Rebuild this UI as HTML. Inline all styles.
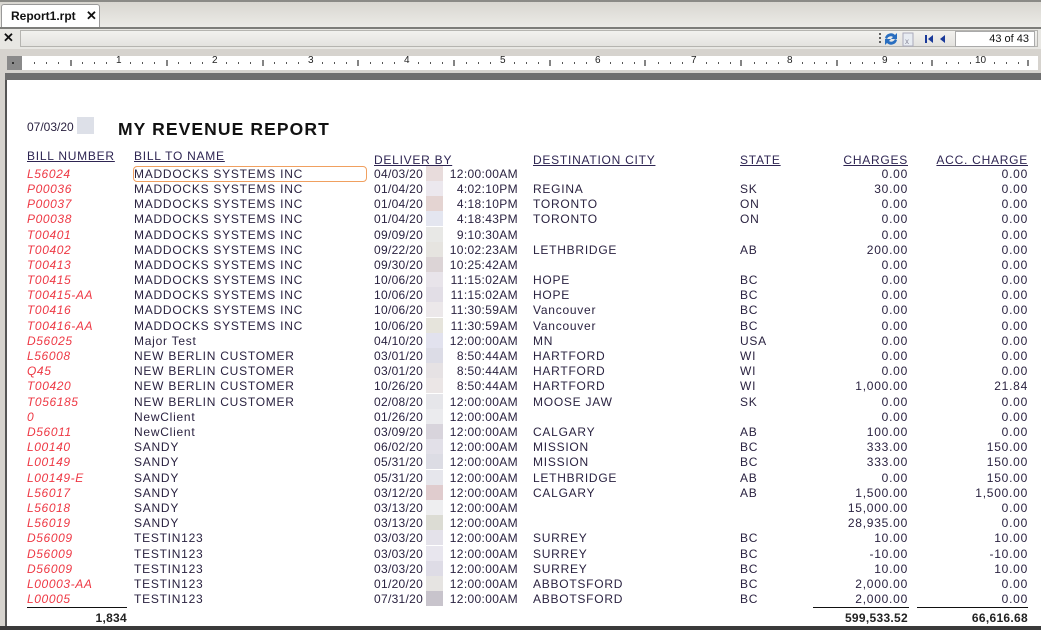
<!DOCTYPE html>
<html><head><meta charset="utf-8">
<style>
*{margin:0;padding:0;box-sizing:border-box}
body{width:1041px;height:630px;overflow:hidden;background:#d6d3ce;font-family:"Liberation Sans",Arial,sans-serif;position:relative}
.abs{position:absolute}
#tabbar{left:0;top:0;width:1041px;height:27px;background:linear-gradient(#d8d6d0,#ecebe7);border-top:2px solid #8a8a86}
#tab{left:1px;top:4px;width:99px;height:23px;background:#fff;border:1px solid #999;border-bottom:none;border-radius:3px 3px 0 0;font-size:12px;font-weight:bold;color:#111;padding:4px 0 0 9px}
#tab span{position:absolute;left:84px;top:3px;font-size:13px}
#tb{left:0;top:27px;width:1041px;height:22px;background:#e8e7e3;border-top:2px solid #7d7d7a}
#tbx{left:3px;top:30px;font-size:13px;font-weight:bold;color:#111}
#tbfield{left:20px;top:30px;width:1018px;height:17px;background:linear-gradient(#f2f2ef,#e4e3df);border:1px solid #b5b4b0}
#pg{left:955px;top:31px;width:80px;height:16px;background:#fff;border:1px solid #aaa;font-size:11px;text-align:right;padding:1px 5px 0 0;color:#111}
#ruler{left:22px;top:56px;width:1016px;height:14px;background:#fff}
#rgrey{left:7px;top:56px;width:15px;height:14px;background:#8a8a8a}
.rn{position:absolute;top:55px;font-size:10px;color:#222}
#band{left:5px;top:73px;width:1036px;height:8px;background:#6e6e6e}
#page{left:5px;top:80px;width:1036px;height:546px;background:#fff;border-left:2px solid #555}
#bot{left:0;top:626px;width:1041px;height:4px;background:#3a3a3a}
.t{position:absolute;font-size:12px;letter-spacing:0.75px;color:#2a2240;white-space:nowrap;line-height:14px}
.h{text-decoration:underline;color:#2e2552}
.b{color:#ee3844;font-style:italic;letter-spacing:0.6px}
.r{text-align:right}
.tm{letter-spacing:0.35px}
.sq{position:absolute;width:17px;height:15px}
</style></head><body>
<div id="tabbar" class="abs"></div>
<div id="tab" class="abs">Report1.rpt<span>✕</span></div>
<div id="tb" class="abs"></div>
<div id="tbfield" class="abs"></div>
<div id="tbx" class="abs">✕</div>
<svg class="abs" style="left:878px;top:31px" width="72" height="16">
<circle cx="2" cy="3" r="1" fill="#333"/><circle cx="2" cy="7" r="1" fill="#333"/><circle cx="2" cy="11" r="1" fill="#333"/>
<path d="M7 7a6 6 0 0 1 10-3l2-2v6h-6l2-2a4 4 0 0 0-6 2z" fill="#2a6fc0"/>
<path d="M19 9a6 6 0 0 1-10 3l-2 2v-6h6l-2 2a4 4 0 0 0 6-2z" fill="#2a6fc0"/>
<rect x="25" y="2" width="10" height="13" fill="#e8ecf2" stroke="#aab"/><text x="27" y="13" font-size="8" fill="#889" font-family="Liberation Sans">x</text>
<rect x="47" y="4" width="2" height="8" fill="#1a3a9a"/><path d="M55 4v8l-5-4z" fill="#1a3a9a"/>
<path d="M67 4v8l-5-4z" fill="#1a3a9a"/>
</svg>
<div id="pg" class="abs">43 of 43</div>
<div id="rgrey" class="abs"></div>
<div id="ruler" class="abs"></div>
<svg class="abs" style="left:0;top:56px" width="1041" height="14">
<rect x="12" y="6" width="2" height="2" fill="#333"/>
<path d="M34 7h1M46 7h1M58 7h1M82 7h1M94 7h1M106 7h1M130 7h1M142 7h1M154 7h1M178 7h1M190 7h1M202 7h1M226 7h1M238 7h1M250 7h1M274 7h1M286 7h1M298 7h1M322 7h1M334 7h1M346 7h1M370 7h1M382 7h1M394 7h1M418 7h1M430 7h1M442 7h1M466 7h1M478 7h1M490 7h1M514 7h1M526 7h1M538 7h1M562 7h1M574 7h1M586 7h1M610 7h1M622 7h1M634 7h1M658 7h1M670 7h1M682 7h1M706 7h1M718 7h1M730 7h1M754 7h1M766 7h1M778 7h1M802 7h1M814 7h1M826 7h1M850 7h1M862 7h1M874 7h1M898 7h1M910 7h1M922 7h1M946 7h1M958 7h1M970 7h1M994 7h1M1006 7h1M1018 7h1" stroke="#555" stroke-width="2"/>
<path d="M71 4v6M167 4v6M263 4v6M358 4v6M454 4v6M550 4v6M645 4v6M741 4v6M837 4v6M932 4v6M1028 4v6" stroke="#333" stroke-width="1.2"/>
</svg>
<div class="rn" style="left:116px">1</div><div class="rn" style="left:212px">2</div><div class="rn" style="left:308px">3</div><div class="rn" style="left:404px">4</div><div class="rn" style="left:500px">5</div><div class="rn" style="left:595px">6</div><div class="rn" style="left:691px">7</div><div class="rn" style="left:787px">8</div><div class="rn" style="left:882px">9</div><div class="rn" style="left:975px">10</div>
<div id="band" class="abs"></div>
<div id="page" class="abs"></div>
<div id="bot" class="abs"></div>

<div class="t" style="left:27px;top:120px;letter-spacing:0">07/03/20</div>
<div class="sq" style="left:77px;top:117px;background:#dde0e8;height:17px"></div>
<div class="t" style="left:118px;top:120px;font-size:17.5px;font-weight:bold;color:#111;letter-spacing:1.1px;line-height:18px">MY REVENUE REPORT</div>

<div class="t h" style="left:27px;top:149px">BILL NUMBER</div>
<div class="t h" style="left:134px;top:149px">BILL TO NAME</div>
<div class="t h" style="left:374px;top:153px">DELIVER BY</div>
<div class="t h" style="left:533px;top:153px">DESTINATION CITY</div>
<div class="t h" style="left:740px;top:153px">STATE</div>
<div class="t h r" style="left:807px;top:153px;width:101px">CHARGES</div>
<div class="t h r" style="left:917px;top:153px;width:111px">ACC. CHARGE</div>

<div class="abs" style="left:133px;top:166px;width:234px;height:16px;border:1px solid #f0a060;border-radius:4px"></div>

<div style="position:absolute;left:0;top:167px">
<div class="t b" style="left:27px;top:0">L56024</div><div class="t" style="left:134px;top:0">MADDOCKS SYSTEMS INC</div><div class="t" style="left:374px;top:0;letter-spacing:0.3px">04/03/20</div><div class="sq" style="left:426px;top:-1px;background:#e8dcdc"></div><div class="t r tm" style="left:430px;top:0;width:88px">12:00:00AM</div><div class="t r" style="left:807px;top:0;width:101px">0.00</div><div class="t r" style="left:917px;top:0;width:111px">0.00</div>
</div>
<div style="position:absolute;left:0;top:182px">
<div class="t b" style="left:27px;top:0">P00036</div><div class="t" style="left:134px;top:0">MADDOCKS SYSTEMS INC</div><div class="t" style="left:374px;top:0;letter-spacing:0.3px">01/04/20</div><div class="sq" style="left:426px;top:-1px;background:#ece8ee"></div><div class="t r tm" style="left:430px;top:0;width:88px">4:02:10PM</div><div class="t" style="left:533px;top:0">REGINA</div><div class="t" style="left:740px;top:0">SK</div><div class="t r" style="left:807px;top:0;width:101px">30.00</div><div class="t r" style="left:917px;top:0;width:111px">0.00</div>
</div>
<div style="position:absolute;left:0;top:197px">
<div class="t b" style="left:27px;top:0">P00037</div><div class="t" style="left:134px;top:0">MADDOCKS SYSTEMS INC</div><div class="t" style="left:374px;top:0;letter-spacing:0.3px">01/04/20</div><div class="sq" style="left:426px;top:-1px;background:#e4d4d2"></div><div class="t r tm" style="left:430px;top:0;width:88px">4:18:10PM</div><div class="t" style="left:533px;top:0">TORONTO</div><div class="t" style="left:740px;top:0">ON</div><div class="t r" style="left:807px;top:0;width:101px">0.00</div><div class="t r" style="left:917px;top:0;width:111px">0.00</div>
</div>
<div style="position:absolute;left:0;top:212px">
<div class="t b" style="left:27px;top:0">P00038</div><div class="t" style="left:134px;top:0">MADDOCKS SYSTEMS INC</div><div class="t" style="left:374px;top:0;letter-spacing:0.3px">01/04/20</div><div class="sq" style="left:426px;top:-1px;background:#e4e6f0"></div><div class="t r tm" style="left:430px;top:0;width:88px">4:18:43PM</div><div class="t" style="left:533px;top:0">TORONTO</div><div class="t" style="left:740px;top:0">ON</div><div class="t r" style="left:807px;top:0;width:101px">0.00</div><div class="t r" style="left:917px;top:0;width:111px">0.00</div>
</div>
<div style="position:absolute;left:0;top:228px">
<div class="t b" style="left:27px;top:0">T00401</div><div class="t" style="left:134px;top:0">MADDOCKS SYSTEMS INC</div><div class="t" style="left:374px;top:0;letter-spacing:0.3px">09/09/20</div><div class="sq" style="left:426px;top:-1px;background:#e8e8e6"></div><div class="t r tm" style="left:430px;top:0;width:88px">9:10:30AM</div><div class="t r" style="left:807px;top:0;width:101px">0.00</div><div class="t r" style="left:917px;top:0;width:111px">0.00</div>
</div>
<div style="position:absolute;left:0;top:243px">
<div class="t b" style="left:27px;top:0">T00402</div><div class="t" style="left:134px;top:0">MADDOCKS SYSTEMS INC</div><div class="t" style="left:374px;top:0;letter-spacing:0.3px">09/22/20</div><div class="sq" style="left:426px;top:-1px;background:#e6e4e0"></div><div class="t r tm" style="left:430px;top:0;width:88px">10:02:23AM</div><div class="t" style="left:533px;top:0">LETHBRIDGE</div><div class="t" style="left:740px;top:0">AB</div><div class="t r" style="left:807px;top:0;width:101px">200.00</div><div class="t r" style="left:917px;top:0;width:111px">0.00</div>
</div>
<div style="position:absolute;left:0;top:258px">
<div class="t b" style="left:27px;top:0">T00413</div><div class="t" style="left:134px;top:0">MADDOCKS SYSTEMS INC</div><div class="t" style="left:374px;top:0;letter-spacing:0.3px">09/30/20</div><div class="sq" style="left:426px;top:-1px;background:#dcd4d6"></div><div class="t r tm" style="left:430px;top:0;width:88px">10:25:42AM</div><div class="t r" style="left:807px;top:0;width:101px">0.00</div><div class="t r" style="left:917px;top:0;width:111px">0.00</div>
</div>
<div style="position:absolute;left:0;top:273px">
<div class="t b" style="left:27px;top:0">T00415</div><div class="t" style="left:134px;top:0">MADDOCKS SYSTEMS INC</div><div class="t" style="left:374px;top:0;letter-spacing:0.3px">10/06/20</div><div class="sq" style="left:426px;top:-1px;background:#e8e4ea"></div><div class="t r tm" style="left:430px;top:0;width:88px">11:15:02AM</div><div class="t" style="left:533px;top:0">HOPE</div><div class="t" style="left:740px;top:0">BC</div><div class="t r" style="left:807px;top:0;width:101px">0.00</div><div class="t r" style="left:917px;top:0;width:111px">0.00</div>
</div>
<div style="position:absolute;left:0;top:288px">
<div class="t b" style="left:27px;top:0">T00415-AA</div><div class="t" style="left:134px;top:0">MADDOCKS SYSTEMS INC</div><div class="t" style="left:374px;top:0;letter-spacing:0.3px">10/06/20</div><div class="sq" style="left:426px;top:-1px;background:#e2dee6"></div><div class="t r tm" style="left:430px;top:0;width:88px">11:15:02AM</div><div class="t" style="left:533px;top:0">HOPE</div><div class="t" style="left:740px;top:0">BC</div><div class="t r" style="left:807px;top:0;width:101px">0.00</div><div class="t r" style="left:917px;top:0;width:111px">0.00</div>
</div>
<div style="position:absolute;left:0;top:303px">
<div class="t b" style="left:27px;top:0">T00416</div><div class="t" style="left:134px;top:0">MADDOCKS SYSTEMS INC</div><div class="t" style="left:374px;top:0;letter-spacing:0.3px">10/06/20</div><div class="sq" style="left:426px;top:-1px;background:#ece8ea"></div><div class="t r tm" style="left:430px;top:0;width:88px">11:30:59AM</div><div class="t" style="left:533px;top:0">Vancouver</div><div class="t" style="left:740px;top:0">BC</div><div class="t r" style="left:807px;top:0;width:101px">0.00</div><div class="t r" style="left:917px;top:0;width:111px">0.00</div>
</div>
<div style="position:absolute;left:0;top:319px">
<div class="t b" style="left:27px;top:0">T00416-AA</div><div class="t" style="left:134px;top:0">MADDOCKS SYSTEMS INC</div><div class="t" style="left:374px;top:0;letter-spacing:0.3px">10/06/20</div><div class="sq" style="left:426px;top:-1px;background:#e6e4dc"></div><div class="t r tm" style="left:430px;top:0;width:88px">11:30:59AM</div><div class="t" style="left:533px;top:0">Vancouver</div><div class="t" style="left:740px;top:0">BC</div><div class="t r" style="left:807px;top:0;width:101px">0.00</div><div class="t r" style="left:917px;top:0;width:111px">0.00</div>
</div>
<div style="position:absolute;left:0;top:334px">
<div class="t b" style="left:27px;top:0">D56025</div><div class="t" style="left:134px;top:0">Major Test</div><div class="t" style="left:374px;top:0;letter-spacing:0.3px">04/10/20</div><div class="sq" style="left:426px;top:-1px;background:#e2e2ee"></div><div class="t r tm" style="left:430px;top:0;width:88px">12:00:00AM</div><div class="t" style="left:533px;top:0">MN</div><div class="t" style="left:740px;top:0">USA</div><div class="t r" style="left:807px;top:0;width:101px">0.00</div><div class="t r" style="left:917px;top:0;width:111px">0.00</div>
</div>
<div style="position:absolute;left:0;top:349px">
<div class="t b" style="left:27px;top:0">L56008</div><div class="t" style="left:134px;top:0">NEW BERLIN CUSTOMER</div><div class="t" style="left:374px;top:0;letter-spacing:0.3px">03/01/20</div><div class="sq" style="left:426px;top:-1px;background:#dcdce6"></div><div class="t r tm" style="left:430px;top:0;width:88px">8:50:44AM</div><div class="t" style="left:533px;top:0">HARTFORD</div><div class="t" style="left:740px;top:0">WI</div><div class="t r" style="left:807px;top:0;width:101px">0.00</div><div class="t r" style="left:917px;top:0;width:111px">0.00</div>
</div>
<div style="position:absolute;left:0;top:364px">
<div class="t b" style="left:27px;top:0">Q45</div><div class="t" style="left:134px;top:0">NEW BERLIN CUSTOMER</div><div class="t" style="left:374px;top:0;letter-spacing:0.3px">03/01/20</div><div class="sq" style="left:426px;top:-1px;background:#e6e2e4"></div><div class="t r tm" style="left:430px;top:0;width:88px">8:50:44AM</div><div class="t" style="left:533px;top:0">HARTFORD</div><div class="t" style="left:740px;top:0">WI</div><div class="t r" style="left:807px;top:0;width:101px">0.00</div><div class="t r" style="left:917px;top:0;width:111px">0.00</div>
</div>
<div style="position:absolute;left:0;top:379px">
<div class="t b" style="left:27px;top:0">T00420</div><div class="t" style="left:134px;top:0">NEW BERLIN CUSTOMER</div><div class="t" style="left:374px;top:0;letter-spacing:0.3px">10/26/20</div><div class="sq" style="left:426px;top:-1px;background:#ebe6e6"></div><div class="t r tm" style="left:430px;top:0;width:88px">8:50:44AM</div><div class="t" style="left:533px;top:0">HARTFORD</div><div class="t" style="left:740px;top:0">WI</div><div class="t r" style="left:807px;top:0;width:101px">1,000.00</div><div class="t r" style="left:917px;top:0;width:111px">21.84</div>
</div>
<div style="position:absolute;left:0;top:395px">
<div class="t b" style="left:27px;top:0">T056185</div><div class="t" style="left:134px;top:0">NEW BERLIN CUSTOMER</div><div class="t" style="left:374px;top:0;letter-spacing:0.3px">02/08/20</div><div class="sq" style="left:426px;top:-1px;background:#e6e6ea"></div><div class="t r tm" style="left:430px;top:0;width:88px">12:00:00AM</div><div class="t" style="left:533px;top:0">MOOSE JAW</div><div class="t" style="left:740px;top:0">SK</div><div class="t r" style="left:807px;top:0;width:101px">0.00</div><div class="t r" style="left:917px;top:0;width:111px">0.00</div>
</div>
<div style="position:absolute;left:0;top:410px">
<div class="t b" style="left:27px;top:0">0</div><div class="t" style="left:134px;top:0">NewClient</div><div class="t" style="left:374px;top:0;letter-spacing:0.3px">01/26/20</div><div class="sq" style="left:426px;top:-1px;background:#ebebee"></div><div class="t r tm" style="left:430px;top:0;width:88px">12:00:00AM</div><div class="t r" style="left:807px;top:0;width:101px">0.00</div><div class="t r" style="left:917px;top:0;width:111px">0.00</div>
</div>
<div style="position:absolute;left:0;top:425px">
<div class="t b" style="left:27px;top:0">D56011</div><div class="t" style="left:134px;top:0">NewClient</div><div class="t" style="left:374px;top:0;letter-spacing:0.3px">03/09/20</div><div class="sq" style="left:426px;top:-1px;background:#d8d4dc"></div><div class="t r tm" style="left:430px;top:0;width:88px">12:00:00AM</div><div class="t" style="left:533px;top:0">CALGARY</div><div class="t" style="left:740px;top:0">AB</div><div class="t r" style="left:807px;top:0;width:101px">100.00</div><div class="t r" style="left:917px;top:0;width:111px">0.00</div>
</div>
<div style="position:absolute;left:0;top:440px">
<div class="t b" style="left:27px;top:0">L00140</div><div class="t" style="left:134px;top:0">SANDY</div><div class="t" style="left:374px;top:0;letter-spacing:0.3px">06/02/20</div><div class="sq" style="left:426px;top:-1px;background:#e2e0e8"></div><div class="t r tm" style="left:430px;top:0;width:88px">12:00:00AM</div><div class="t" style="left:533px;top:0">MISSION</div><div class="t" style="left:740px;top:0">BC</div><div class="t r" style="left:807px;top:0;width:101px">333.00</div><div class="t r" style="left:917px;top:0;width:111px">150.00</div>
</div>
<div style="position:absolute;left:0;top:455px">
<div class="t b" style="left:27px;top:0">L00149</div><div class="t" style="left:134px;top:0">SANDY</div><div class="t" style="left:374px;top:0;letter-spacing:0.3px">05/31/20</div><div class="sq" style="left:426px;top:-1px;background:#dcdce4"></div><div class="t r tm" style="left:430px;top:0;width:88px">12:00:00AM</div><div class="t" style="left:533px;top:0">MISSION</div><div class="t" style="left:740px;top:0">BC</div><div class="t r" style="left:807px;top:0;width:101px">333.00</div><div class="t r" style="left:917px;top:0;width:111px">150.00</div>
</div>
<div style="position:absolute;left:0;top:471px">
<div class="t b" style="left:27px;top:0">L00149-E</div><div class="t" style="left:134px;top:0">SANDY</div><div class="t" style="left:374px;top:0;letter-spacing:0.3px">05/31/20</div><div class="sq" style="left:426px;top:-1px;background:#e6e6ec"></div><div class="t r tm" style="left:430px;top:0;width:88px">12:00:00AM</div><div class="t" style="left:533px;top:0">LETHBRIDGE</div><div class="t" style="left:740px;top:0">AB</div><div class="t r" style="left:807px;top:0;width:101px">0.00</div><div class="t r" style="left:917px;top:0;width:111px">150.00</div>
</div>
<div style="position:absolute;left:0;top:486px">
<div class="t b" style="left:27px;top:0">L56017</div><div class="t" style="left:134px;top:0">SANDY</div><div class="t" style="left:374px;top:0;letter-spacing:0.3px">03/12/20</div><div class="sq" style="left:426px;top:-1px;background:#e0ccce"></div><div class="t r tm" style="left:430px;top:0;width:88px">12:00:00AM</div><div class="t" style="left:533px;top:0">CALGARY</div><div class="t" style="left:740px;top:0">AB</div><div class="t r" style="left:807px;top:0;width:101px">1,500.00</div><div class="t r" style="left:917px;top:0;width:111px">1,500.00</div>
</div>
<div style="position:absolute;left:0;top:501px">
<div class="t b" style="left:27px;top:0">L56018</div><div class="t" style="left:134px;top:0">SANDY</div><div class="t" style="left:374px;top:0;letter-spacing:0.3px">03/13/20</div><div class="sq" style="left:426px;top:-1px;background:#eeeef0"></div><div class="t r tm" style="left:430px;top:0;width:88px">12:00:00AM</div><div class="t r" style="left:807px;top:0;width:101px">15,000.00</div><div class="t r" style="left:917px;top:0;width:111px">0.00</div>
</div>
<div style="position:absolute;left:0;top:516px">
<div class="t b" style="left:27px;top:0">L56019</div><div class="t" style="left:134px;top:0">SANDY</div><div class="t" style="left:374px;top:0;letter-spacing:0.3px">03/13/20</div><div class="sq" style="left:426px;top:-1px;background:#dcdcd4"></div><div class="t r tm" style="left:430px;top:0;width:88px">12:00:00AM</div><div class="t r" style="left:807px;top:0;width:101px">28,935.00</div><div class="t r" style="left:917px;top:0;width:111px">0.00</div>
</div>
<div style="position:absolute;left:0;top:531px">
<div class="t b" style="left:27px;top:0">D56009</div><div class="t" style="left:134px;top:0">TESTIN123</div><div class="t" style="left:374px;top:0;letter-spacing:0.3px">03/03/20</div><div class="sq" style="left:426px;top:-1px;background:#e4e2ea"></div><div class="t r tm" style="left:430px;top:0;width:88px">12:00:00AM</div><div class="t" style="left:533px;top:0">SURREY</div><div class="t" style="left:740px;top:0">BC</div><div class="t r" style="left:807px;top:0;width:101px">10.00</div><div class="t r" style="left:917px;top:0;width:111px">10.00</div>
</div>
<div style="position:absolute;left:0;top:547px">
<div class="t b" style="left:27px;top:0">D56009</div><div class="t" style="left:134px;top:0">TESTIN123</div><div class="t" style="left:374px;top:0;letter-spacing:0.3px">03/03/20</div><div class="sq" style="left:426px;top:-1px;background:#e8e6ee"></div><div class="t r tm" style="left:430px;top:0;width:88px">12:00:00AM</div><div class="t" style="left:533px;top:0">SURREY</div><div class="t" style="left:740px;top:0">BC</div><div class="t r" style="left:807px;top:0;width:101px">-10.00</div><div class="t r" style="left:917px;top:0;width:111px">-10.00</div>
</div>
<div style="position:absolute;left:0;top:562px">
<div class="t b" style="left:27px;top:0">D56009</div><div class="t" style="left:134px;top:0">TESTIN123</div><div class="t" style="left:374px;top:0;letter-spacing:0.3px">03/03/20</div><div class="sq" style="left:426px;top:-1px;background:#dedce6"></div><div class="t r tm" style="left:430px;top:0;width:88px">12:00:00AM</div><div class="t" style="left:533px;top:0">SURREY</div><div class="t" style="left:740px;top:0">BC</div><div class="t r" style="left:807px;top:0;width:101px">10.00</div><div class="t r" style="left:917px;top:0;width:111px">10.00</div>
</div>
<div style="position:absolute;left:0;top:577px">
<div class="t b" style="left:27px;top:0">L00003-AA</div><div class="t" style="left:134px;top:0">TESTIN123</div><div class="t" style="left:374px;top:0;letter-spacing:0.3px">01/20/20</div><div class="sq" style="left:426px;top:-1px;background:#e6e4e2"></div><div class="t r tm" style="left:430px;top:0;width:88px">12:00:00AM</div><div class="t" style="left:533px;top:0">ABBOTSFORD</div><div class="t" style="left:740px;top:0">BC</div><div class="t r" style="left:807px;top:0;width:101px">2,000.00</div><div class="t r" style="left:917px;top:0;width:111px">0.00</div>
</div>
<div style="position:absolute;left:0;top:592px">
<div class="t b" style="left:27px;top:0">L00005</div><div class="t" style="left:134px;top:0">TESTIN123</div><div class="t" style="left:374px;top:0;letter-spacing:0.3px">07/31/20</div><div class="sq" style="left:426px;top:-1px;background:#c8c4cc"></div><div class="t r tm" style="left:430px;top:0;width:88px">12:00:00AM</div><div class="t" style="left:533px;top:0">ABBOTSFORD</div><div class="t" style="left:740px;top:0">BC</div><div class="t r" style="left:807px;top:0;width:101px">2,000.00</div><div class="t r" style="left:917px;top:0;width:111px">0.00</div>
</div>

<div class="abs" style="left:27px;top:607px;width:100px;height:1px;background:#111"></div>
<div class="abs" style="left:813px;top:607px;width:96px;height:1px;background:#111"></div>
<div class="abs" style="left:917px;top:607px;width:111px;height:1px;background:#111"></div>
<div class="t r" style="left:27px;top:611px;width:100px;font-weight:bold;color:#222;letter-spacing:0.3px">1,834</div>
<div class="t r" style="left:807px;top:611px;width:101px;font-weight:bold;color:#222;letter-spacing:0.3px">599,533.52</div>
<div class="t r" style="left:917px;top:611px;width:111px;font-weight:bold;color:#222;letter-spacing:0.3px">66,616.68</div>
</body></html>
